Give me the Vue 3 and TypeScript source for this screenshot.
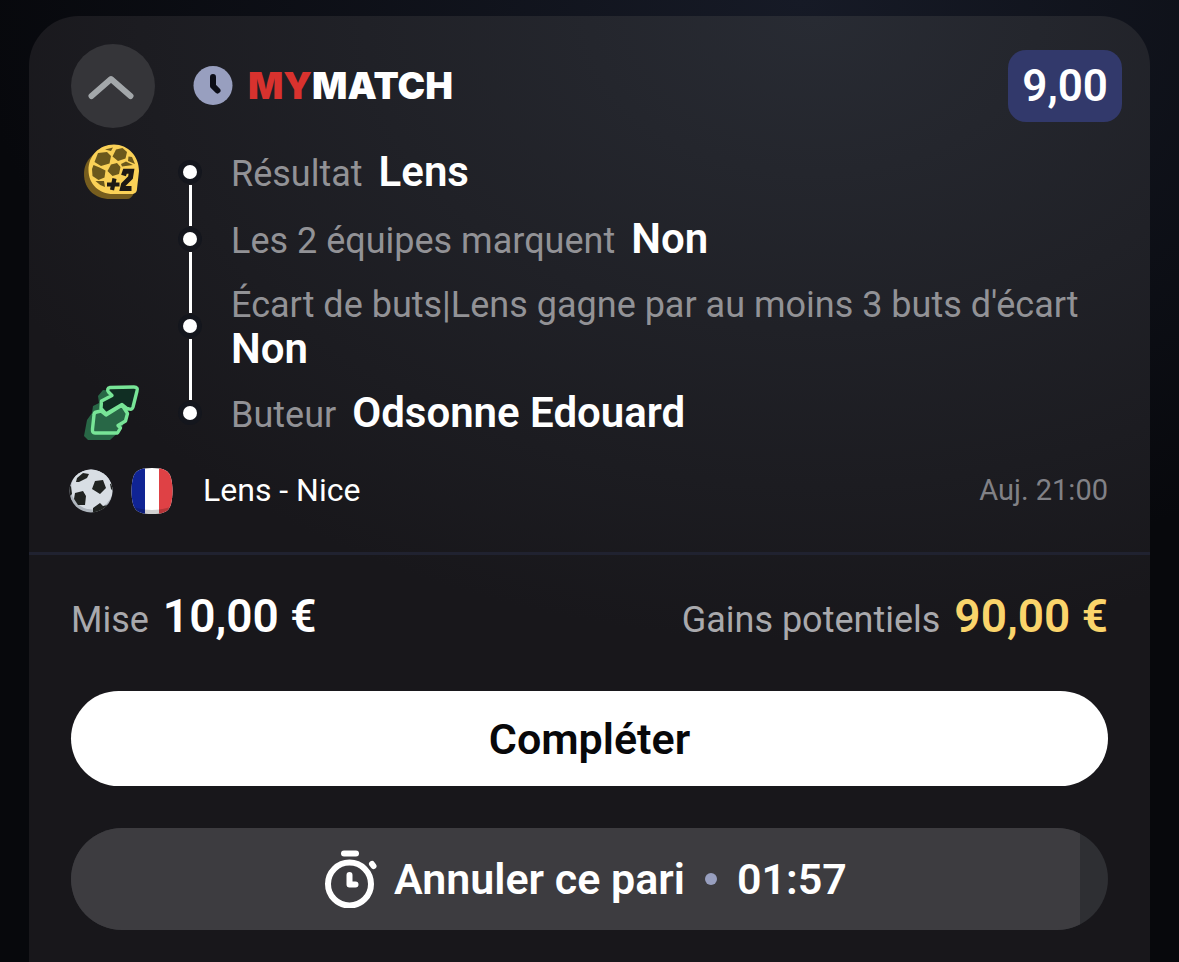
<script setup lang="ts">
interface Leg {
  market: string
  pick: string
  badge?: 'plusTwo' | 'swap'
}

const legs: Leg[] = [
  { market: 'Résultat', pick: 'Lens', badge: 'plusTwo' },
  { market: 'Les 2 équipes marquent', pick: 'Non' },
  { market: "Écart de buts|Lens gagne par au moins 3 buts d'écart", pick: 'Non' },
  { market: 'Buteur', pick: 'Odsonne Edouard', badge: 'swap' },
]

const cancelProgress = 97.3
</script>

<template>
  <main class="page">
    <article class="card">
      <section class="bet">
        <header class="head">
          <button class="collapse" type="button" aria-label="Réduire">
            <svg width="84" height="84" viewBox="0 0 84 84" aria-hidden="true">
              <path d="M20.500 52L40 35L59.500 52" fill="none" stroke="#a3a7aa" stroke-width="6" stroke-linecap="round" stroke-linejoin="round" />
            </svg>
          </button>
          <svg class="clock" width="40" height="40" viewBox="0 0 40 40" aria-hidden="true">
            <circle cx="20" cy="19.500" r="19.500" fill="#989fbf" />
            <path d="M20 11V20L24.500 24.500" fill="none" stroke="#0c0d16" stroke-width="6" stroke-linecap="round" stroke-linejoin="round" />
          </svg>
          <h1 class="brand"><span class="brand-my">MY</span>MATCH</h1>
          <span class="odds">9,00</span>
        </header>

        <ul class="legs">
          <li v-for="leg in legs" :key="leg.market" class="leg">
            <span class="badge">
              <svg v-if="leg.badge === 'plusTwo'" width="56" height="56" viewBox="0 0 56 56" aria-hidden="true">
                <path d="M24 5C10 7 0 16 0 30C0 45 11 55 26 55H43C46 55 48 53 50 49L50 20Z" fill="#765d1e" />
                <path d="M30 0.500C15 0.500 4.500 12 4.500 26C4.500 40 15 50 29 50H47C51 50 53 48 53 45L55 27C55 12 44 0.500 30 0.500Z" fill="#fad157" />
                <path d="M14 9L23 8L27 12L25.500 19.500L17 22L10.500 18Z M32 5.500L38.500 4L43 8L41.500 14.500L34 17L28.500 12.500Z M9.500 21L15.500 23.500L21.500 26.500L20.500 33.500L14.500 36L8.500 32L8 25Z M27 20.500L33 19L36.500 23L35 30L28.500 32L23.500 27Z M21 5.500L29 3.500L27 7Z M44.500 12.500L48 13L51 20L44 17Z M37 20L42 17.500L49 21L38 22.500Z M11.500 37L20 37L21 43Q15 41 11.500 37Z" fill="#6b581c" />
                <path d="M23 40.500H35.500M30.500 34.500L28 46" stroke="#1d1915" stroke-width="4.200" />
                <path d="M39.500 31.500L41 27.300H47.500L46.500 33.500L39.500 40.500L38.500 44.500H47.500" fill="none" stroke="#1d1915" stroke-width="5" />
              </svg>
              <svg v-if="leg.badge === 'swap'" width="56" height="56" viewBox="0 0 56 56" aria-hidden="true">
                <path d="M19 5L44 7L44 27L37 45L26 55H4L0 51L3 35L8 28L9 21L15 18L14 11Z" fill="#286746" />
                <path d="M12.500 27L17 26L22 30L38 20L43.500 28.500L41.500 36L34 40.500L36.500 43L33.500 48H11Q8 48 8.500 44L10 30Q10 27.500 12.500 27Z" fill="#286746" stroke="#78e597" stroke-width="3.400" stroke-linejoin="round" />
                <path d="M26 2.500L50 2C53 2 54 4 53 6L49 22Q48 25 45 24L43 23.500L38 19.500L22 29L17 23.500L17.500 16L28 10.500L24.500 7C23 5 23.500 3 26 2.500Z" fill="#102e23" stroke="#78e597" stroke-width="3.400" stroke-linejoin="round" />
              </svg>
            </span>
            <span class="rail"><i class="dot"></i></span>
            <p class="text">
              <span class="market">{{ leg.market }}</span>
              <strong class="pick">{{ leg.pick }}</strong>
            </p>
          </li>
        </ul>

        <footer class="match">
          <svg class="ball" width="44" height="44" viewBox="0 0 44 44" aria-hidden="true">
            <defs><clipPath id="ball"><circle cx="22" cy="22" r="21.500" /></clipPath></defs>
            <g clip-path="url(#ball)">
              <rect width="44" height="44" fill="#aeb5bd" />
              <circle cx="23" cy="19.500" r="21" fill="#d8dee4" />
              <path d="M8 9L14 4L20 5L18 9L10 13L7 13Z M26 12L34 11L37 19L31 25L23 20Z M6 24L14 22L17 27L16 36L9 36L5 30Z M24 39L31 34L34 37L39 36L36 45H24Z M0 18L2 17L3 25L1 27Z M41 15L44 14V22L42 20Z" fill="#202321" />
            </g>
          </svg>
          <svg class="flag" width="42" height="46" viewBox="0 0 42 46" aria-hidden="true">
            <defs><clipPath id="flag"><path d="M21 0C34 0 38 3 40 10C42 18 42 28 40 36C38 43 34 46 21 46C8 46 4 43 2 36C0 28 0 18 2 10C4 3 8 0 21 0Z" /></clipPath></defs>
            <g clip-path="url(#flag)">
              <rect width="42" height="46" fill="#fff" />
              <rect width="14" height="46" fill="#102494" />
              <rect x="28" width="14" height="46" fill="#df4145" />
              <path d="M0 38Q21 46 42 38V46H0Z" fill="#000" fill-opacity=".18" />
            </g>
          </svg>
          <span class="teams">Lens - Nice</span>
          <time class="when">Auj. 21:00</time>
        </footer>
      </section>

      <section class="summary">
        <div class="amounts">
          <p class="amount"><span class="caption">Mise</span><strong>10,00 €</strong></p>
          <p class="amount gains"><span class="caption">Gains potentiels</span><strong>90,00 €</strong></p>
        </div>
        <button class="complete" type="button">Compléter</button>
        <button class="cancel" type="button">
          <span class="progress" :style="{ width: cancelProgress + '%' }"></span>
          <svg class="timer" width="54" height="58" viewBox="0 0 54 58" aria-hidden="true">
            <circle cx="25.500" cy="34" r="21.500" fill="none" stroke="#fff" stroke-width="6" />
            <path d="M20 3.500H32" stroke="#fff" stroke-width="6" stroke-linecap="round" />
            <path d="M48 14L49.500 16" stroke="#fff" stroke-width="6" stroke-linecap="round" />
            <path d="M25.500 25V34.500H31.500" fill="none" stroke="#fff" stroke-width="6" stroke-linecap="round" stroke-linejoin="round" />
          </svg>
          <span class="label">Annuler ce pari</span>
          <i class="separator"></i>
          <span class="label">01:57</span>
        </button>
      </section>
    </article>
  </main>
</template>

<style>
body {
  background: #07080c;
}
</style>

<style scoped>
.page {
  min-height: 100vh;
  box-sizing: border-box;
  padding: 16px 29px 0;
  display: flex;
  background: radial-gradient(ellipse 70% 60% at 68% 0, #161a26, #07080c);
  font-family: Roboto, "Liberation Sans", sans-serif;
  color: #fff;
}
.card {
  flex: 1;
  min-width: 0;
  border-radius: 50px 50px 0 0;
  background: radial-gradient(ellipse 80% 66% at 70% 0, #282b33, #18171b);
}
.bet {
  padding: 28px 42px 38px;
  border-bottom: 3px solid #202230;
}
.head {
  display: flex;
  align-items: center;
  height: 84px;
  margin-right: -14px;
}
.collapse {
  width: 84px;
  height: 84px;
  padding: 0;
  border: 0;
  border-radius: 50%;
  background: #353539;
}
.collapse svg {
  display: block;
}
.clock {
  margin-left: 38px;
}
.brand {
  margin: 0 0 0 15px;
  font: 900 37px/44px Inter, sans-serif;
}
.brand-my {
  color: #d8322e;
}
.odds {
  margin-left: auto;
  padding: 0 14px;
  border-radius: 18px;
  background: #32396b;
  font-size: 44px;
  font-weight: 600;
  line-height: 72px;
}
.legs {
  margin: 10px 0 0;
  padding: 0;
  list-style: none;
}
.leg {
  display: grid;
  grid-template-columns: 84px 70px 1fr;
}
.badge {
  display: flex;
  align-items: center;
  justify-content: center;
  padding-right: 2px;
}
.badge svg {
  margin: -8px 0;
}
.rail {
  display: flex;
  flex-direction: column;
  align-items: center;
  gap: 6px;
}
.rail::before,
.rail::after {
  content: "";
  flex: 1;
  width: 3px;
  background: #fff;
}
.leg:first-child .rail::before,
.leg:last-child .rail::after {
  background: none;
}
.dot {
  width: 14px;
  height: 14px;
  border-radius: 50%;
  background: #fff;
  box-shadow: 0 0 0 5px #14161d;
}
.text {
  margin: 0;
  padding: 12px 0 9px 6px;
  display: flex;
  flex-wrap: wrap;
  align-items: baseline;
  column-gap: 16px;
  line-height: 43px;
}
.text,
.caption {
  font-size: 36px;
}
.market {
  color: #929296;
}
.pick {
  font-size: 42px;
  font-weight: 600;
}
.match {
  display: flex;
  align-items: center;
  margin-top: 22px;
  height: 46px;
}
.ball {
  margin-left: -2px;
}
.flag {
  margin-left: 18px;
}
.teams {
  margin-left: 30px;
  font-size: 32px;
}
.when {
  margin-left: auto;
  font-size: 29px;
  color: #818186;
}
.teams,
.when {
  padding-bottom: 2px;
}
.summary {
  padding: 35px 42px 34px;
}
.amounts {
  display: flex;
  justify-content: space-between;
}
.amount {
  display: flex;
  align-items: baseline;
  gap: 14px;
  margin: 0;
  line-height: 52px;
}
.amount strong {
  font-size: 46px;
  font-weight: 600;
}
.caption {
  color: #a9a9ad;
}
.gains strong {
  color: #fad46b;
}
.complete,
.cancel {
  display: flex;
  align-items: center;
  justify-content: center;
  width: 100%;
  padding: 0;
  border: 0;
  border-radius: 51px;
  font-family: inherit;
  font-size: 43px;
  font-weight: 600;
}
.complete {
  height: 95px;
  margin-top: 45px;
  background: #fff;
  color: #08080a;
}
.cancel {
  position: relative;
  overflow: hidden;
  height: 102px;
  margin-top: 42px;
  padding-right: 8px;
  background: #2e2f33;
  color: #fff;
}
.progress {
  position: absolute;
  inset: 0 auto 0 0;
  background: #3d3c40;
}
.timer,
.label,
.separator {
  position: relative;
}
.timer {
  margin-right: 16px;
}
.separator {
  width: 12px;
  height: 12px;
  margin: 0 20px;
  border-radius: 50%;
  background: #989fbf;
}
</style>
